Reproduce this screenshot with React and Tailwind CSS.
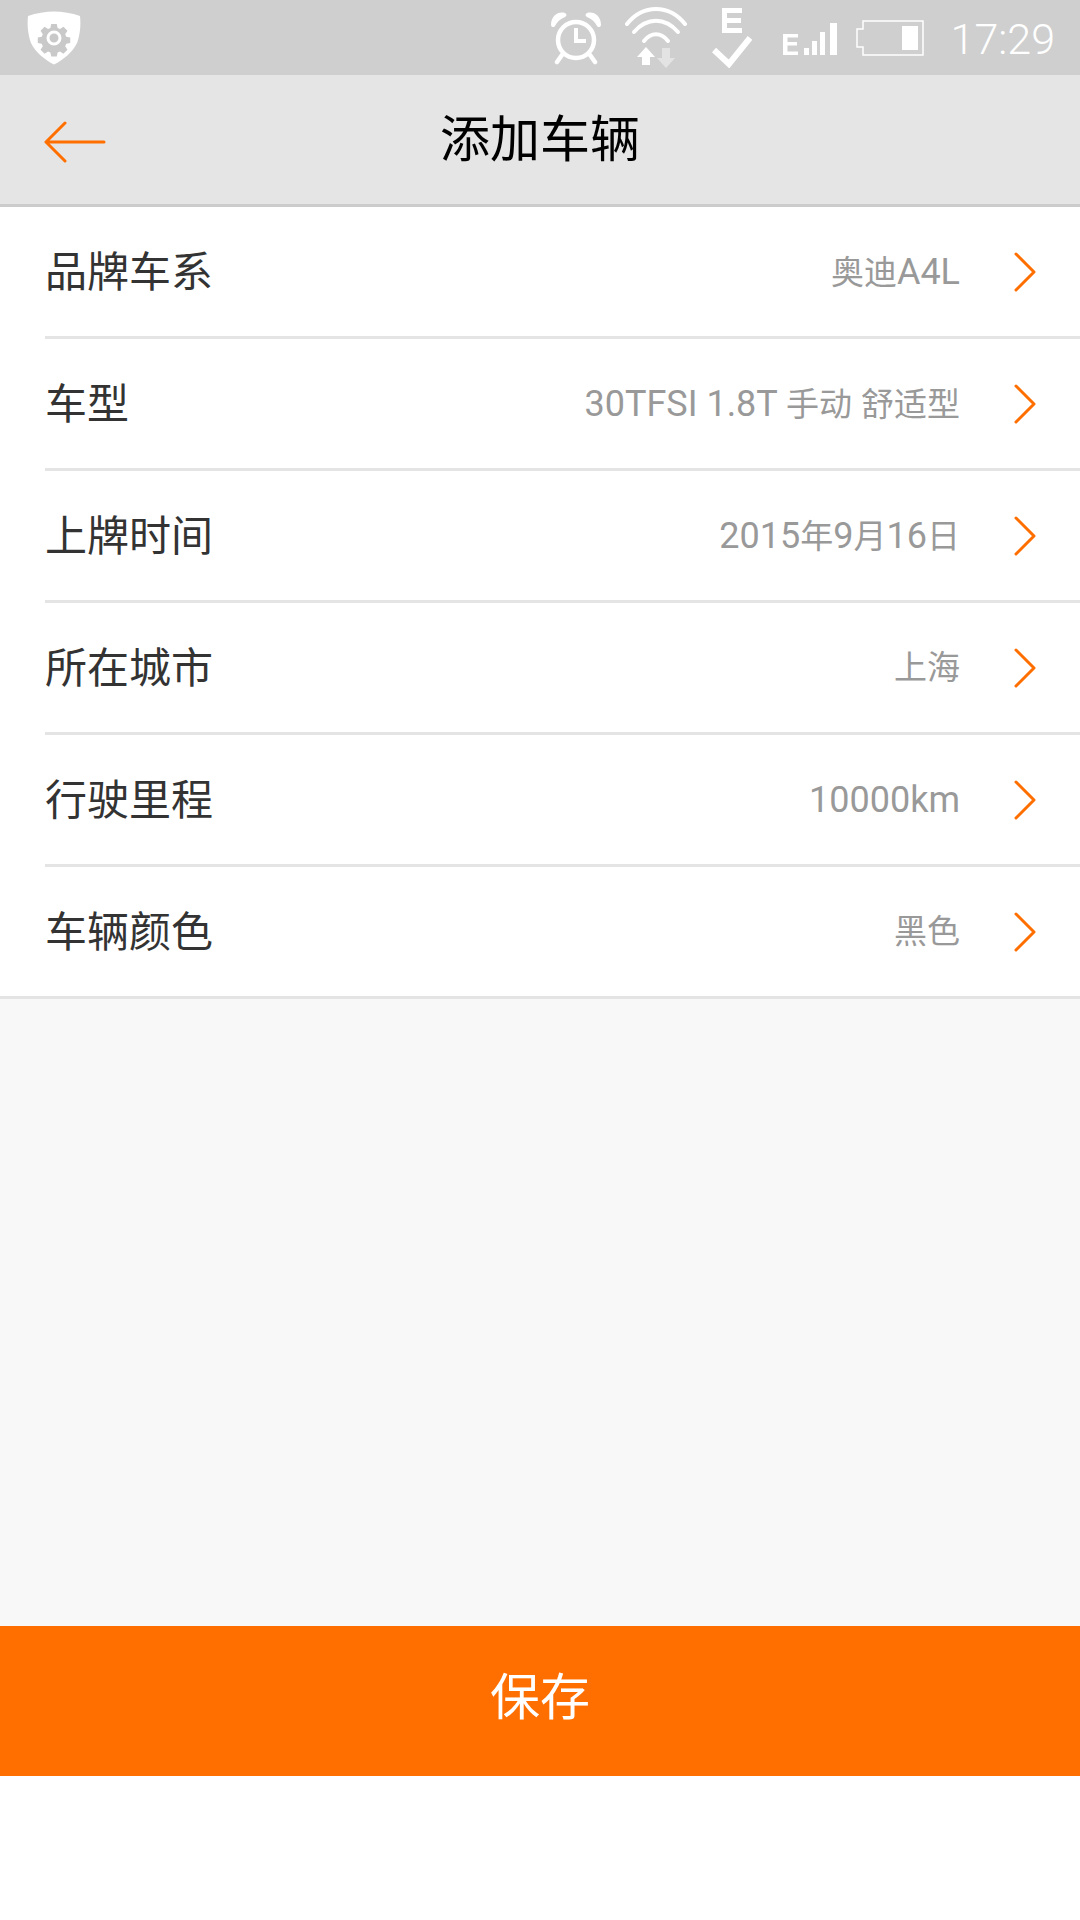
import React from "react";

const rows = [
  { label: "品牌车系", value: "奥迪A4L" },
  { label: "车型", value: "30TFSI 1.8T 手动 舒适型" },
  { label: "上牌时间", value: "2015年9月16日" },
  { label: "所在城市", value: "上海" },
  { label: "行驶里程", value: "10000km" },
  { label: "车辆颜色", value: "黑色" },
];

const ShieldIcon = () => (
  <svg width="54" height="54" viewBox="0 0 54 54">
    <path
      d="M27 0.5C35 0.5 45 2 53 5C54 14 53 24 50 32C46 41 36 49 27 53.5C18 49 8 41 4 32C1 24 0 14 1 5C9 2 19 0.5 27 0.5Z"
      fill="#fff"
    />
    <path
      d="M23.500 9.500h7l1 5 3 1.300 4.300-2.800 5 5-2.800 4.300 1.300 3 5 1v7l-5 1-1.300 3 2.800 4.300-5 5-4.300-2.800-3 1.300-1 5h-7l-1-5-3-1.300-4.300 2.800-5-5 2.800-4.300-1.300-3-5-1v-7l5-1 1.300-3-2.800-4.300 5-5 4.300 2.800 3-1.300z"
      fill="#c9c9c9"
      transform="translate(5.400 5.400) scale(0.8)"
    />
    <circle cx="27" cy="27" r="6" fill="none" stroke="#fff" strokeWidth="3" />
  </svg>
);

const AlarmIcon = () => (
  <svg width="52" height="54" viewBox="0 0 52 54">
    <circle cx="26" cy="29" r="18" fill="none" stroke="#fff" strokeWidth="4.500" />
    <path d="M26 17v13h10" fill="none" stroke="#fff" strokeWidth="4" />
    <path d="M1 14C1 5 8 0 15 2C17 3 17 5 15 6C10 8 7 11 5 15C4 17 1 16 1 14Z" fill="#fff" />
    <path d="M51 14C51 5 44 0 37 2C35 3 35 5 37 6C42 8 45 11 47 15C48 17 51 16 51 14Z" fill="#fff" />
    <path d="M12 44L7 51M40 44L45 51" stroke="#fff" strokeWidth="4.500" strokeLinecap="round" />
  </svg>
);

const WifiIcon = () => (
  <svg width="62" height="62" viewBox="0 0 62 62">
    <path d="M2 17C18 -3 44 -3 60 17" fill="none" stroke="#fff" strokeWidth="4" strokeLinecap="round" />
    <path d="M9 25C22 10 40 10 53 25" fill="none" stroke="#fff" strokeWidth="4" strokeLinecap="round" />
    <path d="M19 34C26 25 36 25 43 34" fill="none" stroke="#fff" strokeWidth="4" strokeLinecap="round" />
    <path d="M21 40L30 50H25V58H17V50H12Z" fill="#fff" />
    <path d="M37 41h8v10h5l-9 10-9-10h5z" fill="#e3e3e3" />
  </svg>
);

const CheckEIcon = () => (
  <svg width="40" height="60" viewBox="0 0 40 60">
    <path d="M10 0h20v5H15v5h14v5H15v5h15v5H10z" fill="#fff" />
    <path d="M2 42L17 56L38 30" fill="none" stroke="#fff" strokeWidth="6" />
  </svg>
);

const SignalIcon = () => (
  <svg width="54" height="32" viewBox="0 0 54 32">
    <path d="M0 11h15v3.500H4.500v4.500H14v3.500H4.500v6H15V32H0z" fill="#fff" />
    <rect x="21" y="25" width="5" height="7" fill="#fff" />
    <rect x="29" y="18" width="5" height="14" fill="#fff" />
    <rect x="37" y="9" width="5" height="23" fill="#fff" />
    <rect x="47" y="0" width="7" height="32" fill="#fff" />
  </svg>
);

const BatteryIcon = () => (
  <svg width="68" height="36" viewBox="0 0 68 36">
    <path
      d="M7 1h60v34H7v-8H1V9h6z"
      fill="none"
      stroke="#fff"
      strokeWidth="1.500"
    />
    <rect x="46" y="6" width="16" height="24" fill="#fff" />
  </svg>
);

const BackArrow = () => (
  <svg width="62" height="42" viewBox="0 0 62 42">
    <path
      d="M60 21H2M21 2L2 21L21 40"
      fill="none"
      stroke="#ff6f00"
      strokeWidth="3"
      strokeLinecap="round"
      strokeLinejoin="round"
    />
  </svg>
);

const Chevron = () => (
  <svg width="24" height="40" viewBox="0 0 24 40">
    <path
      d="M3 2L21 20L3 38"
      fill="none"
      stroke="#ff6f00"
      strokeWidth="3"
      strokeLinecap="round"
      strokeLinejoin="round"
    />
  </svg>
);

// latin runs are a bit bigger than the CJK ones in the reference
const Value = ({ text }) => (
  <span className="ml-auto leading-none text-[#999999] whitespace-pre">
    {text.match(/[\x00-\x7f]+|[^\x00-\x7f]+/g).map((part, i) => (
      <span key={i} className={/[\x00-\x7f]/.test(part) ? "text-[36px]" : "text-[33px]"}>
        {part}
      </span>
    ))}
  </span>
);

const App = () => {
  return (
    <div className="w-[1080px] h-[1920px] flex flex-col bg-white font-['Roboto','Noto_Sans_CJK_SC',sans-serif]">
      {/* Status bar */}
      <div className="h-[75px] shrink-0 bg-[#cfcfcf] flex items-center pl-[27px] pr-[25px]">
        <ShieldIcon />
        <div className="ml-auto flex items-center">
          <AlarmIcon />
          <div className="ml-[23px]"><WifiIcon /></div>
          <div className="ml-[25px]"><CheckEIcon /></div>
          <div className="ml-[31px] mt-[3px]"><SignalIcon /></div>
          <div className="ml-[19px]"><BatteryIcon /></div>
          <span className="ml-[27px] mt-[3px] text-[43px] leading-none font-light text-white">17:29</span>
        </div>
      </div>

      {/* Header */}
      <div className="h-[132px] shrink-0 bg-[#e5e5e5] border-b-[3px] border-[#cccccc] flex items-center justify-center relative">
        <div className="absolute left-[44px] top-[46px]"><BackArrow /></div>
        <h1 className="text-[50px] leading-none text-black font-normal">添加车辆</h1>
      </div>

      {/* Rows */}
      <div className="bg-white">
        {rows.map((row, i) => (
          <div key={row.label} className={i === rows.length - 1 ? "border-b-[3px] border-[#e4e4e4]" : ""}>
            <div className={i === rows.length - 1 ? "" : "ml-[45px] border-b-[3px] border-[#e4e4e4]"}>
              <div className={`h-[129px] flex items-center pr-[43px] ${i === rows.length - 1 ? "pl-[45px]" : ""}`}>
                <span className="text-[42px] leading-none text-[#333333] pt-[2px]">{row.label}</span>
                <Value text={row.value} />
                <div className="ml-[53px]"><Chevron /></div>
              </div>
            </div>
          </div>
        ))}
      </div>

      <div className="flex-1 bg-[#f8f8f8]" />

      {/* Save */}
      <button className="h-[150px] shrink-0 bg-[#ff6f00] text-white text-[50px] leading-none pb-[6px]">保存</button>
      <div className="h-[144px] shrink-0 bg-white" />
    </div>
  );
};

export default App;
